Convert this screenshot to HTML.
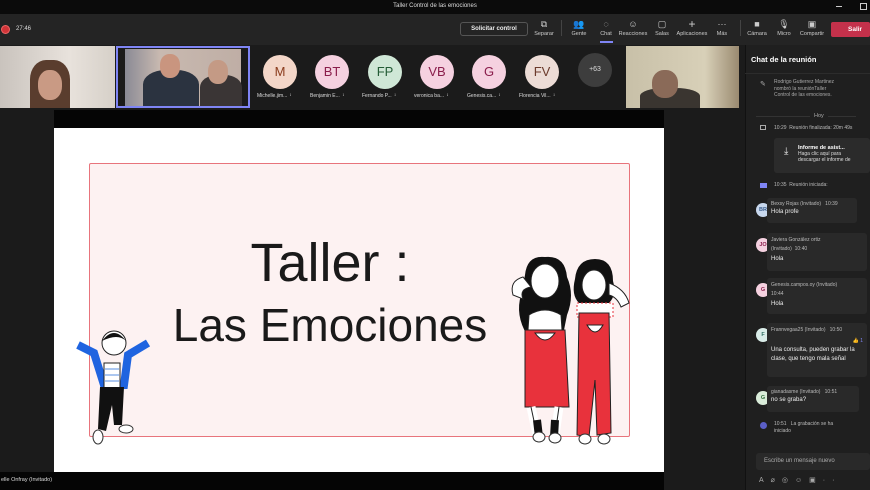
<!DOCTYPE html>
<html><head><meta charset="utf-8"><style>
*{margin:0;padding:0;box-sizing:border-box}
body{width:870px;height:490px;overflow:hidden;background:#1b1b1b;font-family:"Liberation Sans",sans-serif;color:#ddd;position:relative}
.a{position:absolute}
.tb{font-size:5.5px;color:#ccc;text-align:center;line-height:8px}
.tb i{font-style:normal;font-size:9px;display:block;height:12px;line-height:12px}
.av{width:34px;height:34px;border-radius:50%;font-size:13px;text-align:center;line-height:34px}
.nm{font-size:5px;color:#ddd;white-space:nowrap}
.msg{background:#292929;border-radius:3px;font-size:6px;color:#eee;padding:3px 4px}
.msg .h{font-size:5px;color:#bbb;margin-bottom:2px}
.ca{width:14px;height:14px;border-radius:50%;font-size:5.5px;text-align:center;line-height:14px;font-weight:bold}
</style></head><body>
<div class="a" style="left:0;top:0;width:870px;height:14px;background:#0b0b0b"></div>
<div class="a" style="left:0;top:3px;width:870px;text-align:center;font-size:6px;color:#ddd">Taller Control de las emociones</div>
<div class="a" style="left:836px;top:6px;width:6px;height:1px;background:#ccc"></div>
<div class="a" style="left:860px;top:3px;width:7px;height:7px;border:1px solid #ccc"></div>
<div class="a" style="left:0;top:14px;width:870px;height:31px;background:#242424"></div>
<div class="a" style="left:2px;top:26px;width:7px;height:7px;border-radius:50%;background:#d13438;box-shadow:0 0 0 1px #e66"></div>
<div class="a" style="left:16px;top:26px;font-size:6px;color:#ddd">27:46</div>
<div class="a" style="left:460px;top:22px;width:68px;height:14px;border:1px solid #555;border-radius:3px;font-size:6px;font-weight:bold;text-align:center;line-height:12px;color:#eee">Solicitar control</div>
<div class="a tb" style="left:531px;top:18px;width:26px"><i>⧉</i>Separar</div>
<div class="a" style="left:561px;top:20px;width:1px;height:16px;background:#444"></div>
<div class="a tb" style="left:566px;top:18px;width:26px"><i>👥</i>Gente</div>
<div class="a tb" style="left:593px;top:18px;width:26px"><i>◌</i>Chat</div>
<div class="a" style="left:600px;top:41px;width:13px;height:1.5px;background:#7f85f5"></div>
<div class="a tb" style="left:618px;top:18px;width:30px"><i>☺</i>Reacciones</div>
<div class="a tb" style="left:650px;top:18px;width:24px"><i>▢</i>Salas</div>
<div class="a tb" style="left:676px;top:18px;width:32px"><i style="font-size:12px">+</i>Aplicaciones</div>
<div class="a tb" style="left:712px;top:18px;width:20px"><i>···</i>Más</div>
<div class="a" style="left:740px;top:20px;width:1px;height:16px;background:#444"></div>
<div class="a tb" style="left:745px;top:18px;width:24px"><i>■</i>Cámara</div>
<div class="a tb" style="left:772px;top:18px;width:24px"><i>🎙</i>Micro</div>
<div class="a tb" style="left:797px;top:18px;width:30px"><i>▣</i>Compartir</div>
<div class="a" style="left:831px;top:22px;width:39px;height:15px;background:#c4314b;border-radius:2px;font-size:6.5px;font-weight:bold;color:#fff;line-height:15px;padding-left:17px">Salir</div>
<div class="a" style="left:0;top:46px;width:115px;height:62px;background:linear-gradient(90deg,#c9c3bd,#e8e2dc 60%,#d6d0c8)"></div>
<div class="a" style="left:30px;top:60px;width:40px;height:48px;border-radius:40% 40% 0 0;background:#5a3d2e"></div>
<div class="a" style="left:38px;top:70px;width:24px;height:30px;border-radius:45%;background:#c99a84"></div>
<div class="a" style="left:116px;top:46px;width:134px;height:62px;border:2px solid #7f85f5;background:#1b1b1b"></div>
<div class="a" style="left:125px;top:49px;width:116px;height:57px;background:linear-gradient(90deg,#8a8a95,#c8b9b0 30%,#bfaea5)"></div>
<div class="a" style="left:143px;top:70px;width:56px;height:36px;border-radius:40% 40% 0 0;background:#2b3340"></div>
<div class="a" style="left:160px;top:54px;width:20px;height:24px;border-radius:45%;background:#c9957f"></div>
<div class="a" style="left:200px;top:75px;width:42px;height:31px;border-radius:40% 40% 0 0;background:#3a3535"></div>
<div class="a" style="left:208px;top:60px;width:20px;height:24px;border-radius:45%;background:#c49a85"></div>
<div class="a av" style="left:263px;top:55px;background:#f3d6c8;color:#8a3b1c">M</div>
<div class="a av" style="left:315px;top:55px;background:#f5d1e0;color:#8a1d4b">BT</div>
<div class="a av" style="left:368px;top:55px;background:#cfe7d6;color:#245c36">FP</div>
<div class="a av" style="left:420px;top:55px;background:#f5d1e0;color:#8a1d4b">VB</div>
<div class="a av" style="left:472px;top:55px;background:#f5d1e0;color:#8a1d4b">G</div>
<div class="a av" style="left:525px;top:55px;background:#ecdcd6;color:#6b3a2c">FV</div>
<div class="a av" style="left:578px;top:53px;background:#3d3d3d;color:#ddd;font-size:7px">+63</div>
<div class="a nm" style="left:257px;top:93px">Michelle.jim...&nbsp; ꜟ</div>
<div class="a nm" style="left:310px;top:93px">Benjamin E... &nbsp;ꜟ</div>
<div class="a nm" style="left:362px;top:93px">Fernando P... &nbsp;ꜟ</div>
<div class="a nm" style="left:414px;top:93px">veronica ba... &nbsp;ꜟ</div>
<div class="a nm" style="left:467px;top:93px">Genesis.ca... &nbsp;ꜟ</div>
<div class="a nm" style="left:519px;top:93px">Florencia Vil... &nbsp;ꜟ</div>
<div class="a" style="left:626px;top:46px;width:113px;height:62px;background:linear-gradient(90deg,#c8c0a8,#d8d0b8 70%,#9a8a70)"></div>
<div class="a" style="left:640px;top:88px;width:60px;height:20px;border-radius:40% 40% 0 0;background:#3a3530"></div>
<div class="a" style="left:652px;top:70px;width:26px;height:28px;border-radius:45%;background:#8a6a58"></div>
<div class="a" style="left:54px;top:110px;width:610px;height:18px;background:#050505"></div>
<div class="a" style="left:0;top:472px;width:664px;height:18px;background:#050505"></div>
<div class="a" style="left:1px;top:477px;font-size:5.5px;color:#ddd">elle Onfray (Invitado)</div>
<div class="a" style="left:54px;top:128px;width:610px;height:344px;background:#fff"></div>
<div class="a" style="left:89px;top:163px;width:541px;height:274px;background:#fdf2f2;border:1.5px solid #e8747c;border-radius:2px"></div>
<div class="a" style="left:160px;top:233px;width:340px;text-align:center;font-size:54px;color:#1a1a1a;line-height:60px">Taller :</div>
<div class="a" style="left:150px;top:298px;width:360px;text-align:center;font-size:46px;color:#1a1a1a;line-height:54px">Las Emociones</div>
<svg class="a" style="left:74px;top:325px" width="80" height="125" viewBox="0 0 80 125">
<path d="M4 20 L20 28 L30 60 L50 60 L54 30 L74 18" stroke="#1f64e0" stroke-width="8" fill="none"/>
<rect x="30" y="38" width="16" height="26" fill="#fff" stroke="#222"/>
<path d="M31 44h14M31 50h14M31 56h14" stroke="#5a8fe0"/>
<path d="M26 62 L50 62 L48 100 L40 100 L38 80 L32 106 L24 104Z" fill="#111"/>
<circle cx="40" cy="18" r="12" fill="#fff" stroke="#222"/>
<path d="M28 16 Q40 0 52 16 Q44 8 28 16" fill="#111"/>
<ellipse cx="24" cy="112" rx="5" ry="7" fill="#fff" stroke="#333"/>
<ellipse cx="52" cy="104" rx="7" ry="4" fill="#fff" stroke="#333"/>
</svg>
<svg class="a" style="left:505px;top:255px" width="130" height="195" viewBox="0 0 130 195">
<!-- girl1 hair -->
<path d="M20 20 Q22 0 40 2 Q60 0 62 22 Q70 40 62 60 L58 80 L22 80 Q10 60 16 40Z" fill="#111"/>
<path d="M8 40 Q4 26 18 22 L26 32 Q14 34 18 44Z" fill="#fff" stroke="#222"/>
<ellipse cx="40" cy="26" rx="14" ry="17" fill="#fff" stroke="#222"/>
<!-- girl1 overalls -->
<path d="M24 60 Q40 50 56 60 L58 90 L22 90Z" fill="#fff" stroke="#222"/>
<path d="M20 75 L60 75 L64 152 L20 152Z" fill="#e8323c" stroke="#222"/>
<path d="M30 78 Q40 92 50 78Z" fill="#fff" stroke="#222"/>
<path d="M26 152 L32 180 M54 152 L50 180" stroke="#fff" stroke-width="9"/>
<path d="M26 152 L32 180 M54 152 L50 180" stroke="#222" stroke-width="1" fill="none"/>
<path d="M32 165 L34 182 M50 165 L49 182" stroke="#111" stroke-width="8"/>
<!-- girl2 hair -->
<path d="M70 24 Q72 4 90 4 Q108 4 108 26 Q112 40 104 48 L74 48 Q66 40 70 24Z" fill="#111"/>
<ellipse cx="89" cy="30" rx="12" ry="15" fill="#fff" stroke="#222"/>
<path d="M104 28 Q120 34 124 48 L116 52 Q112 42 104 40Z" fill="#fff" stroke="#222"/>
<path d="M72 48 L108 48 L108 62 L72 62Z" fill="#fff" stroke="#e8323c" stroke-dasharray="2 2"/>
<path d="M74 58 L104 58 L106 178 L92 180 L90 125 L84 182 L72 180Z" fill="#e8323c" stroke="#222"/>
<path d="M82 70 Q90 84 98 70Z" fill="#fff" stroke="#222"/>
<ellipse cx="34" cy="182" rx="6" ry="5" fill="#fff" stroke="#333"/>
<ellipse cx="50" cy="183" rx="6" ry="5" fill="#fff" stroke="#333"/>
<ellipse cx="80" cy="184" rx="6" ry="5" fill="#fff" stroke="#333"/>
<ellipse cx="99" cy="184" rx="6" ry="5" fill="#fff" stroke="#333"/>
</svg>
<div class="a" style="left:745px;top:45px;width:125px;height:445px;background:#1f1f1f;border-left:1px solid #111"></div>
<div class="a" style="left:751px;top:55px;font-size:7.5px;font-weight:bold;color:#fff">Chat de la reunión</div>
<div class="a" style="left:745px;top:73px;width:125px;height:1px;background:#2c2c2c"></div>
<div class="a" style="left:760px;top:80px;font-size:7px;color:#aaa">✎</div>
<div class="a" style="left:774px;top:79px;font-size:5px;color:#aaa;line-height:6.5px">Rodrigo Gutierrez Martinez<br>nombró la reuniónTaller<br>Control de las emociones.</div>
<div class="a" style="left:756px;top:116px;width:100px;height:1px;background:#333"></div>
<div class="a" style="left:810px;top:113px;font-size:5.5px;color:#aaa;background:#1f1f1f;padding:0 4px">Hoy</div>
<div class="a" style="left:760px;top:125px;width:6px;height:5px;border:1px solid #aaa"></div>
<div class="a" style="left:774px;top:125px;font-size:5px;color:#bbb">10:29 &nbsp;Reunión finalizada: 20m 49s</div>
<div class="a" style="left:774px;top:138px;width:96px;height:35px;background:#2b2b2b;border-radius:3px"></div>
<div class="a" style="left:784px;top:146px;font-size:10px;color:#eee">⤓</div>
<div class="a" style="left:798px;top:145px;font-size:5px;color:#ddd;line-height:6px"><b style="font-size:5.5px;color:#fff">Informe de asist...</b><br>Haga clic aquí para<br>descargar el informe de</div>
<div class="a" style="left:760px;top:183px;width:7px;height:5px;background:#7f85f5"></div>
<div class="a" style="left:774px;top:182px;font-size:5px;color:#bbb">10:35 &nbsp;Reunión iniciada:</div>
<div class="a ca" style="left:756px;top:203px;background:#c8d8ee;color:#3b5e8c">BR</div>
<div class="a msg" style="left:767px;top:198px;width:90px;height:25px"><div class="h">Bexsy Rojas (Invitado) &nbsp; 10:39</div>Hola profe</div>
<div class="a ca" style="left:756px;top:238px;background:#f5d1e0;color:#8a1d4b">JO</div>
<div class="a msg" style="left:767px;top:233px;width:100px;height:38px"><div class="h" style="line-height:9px">Javiera González ortiz<br>(Invitado) &nbsp;10:40</div>Hola</div>
<div class="a ca" style="left:756px;top:283px;background:#f5d1e0;color:#8a1d4b">G</div>
<div class="a msg" style="left:767px;top:278px;width:100px;height:36px"><div class="h" style="line-height:9px">Genesis.campos.oy (Invitado)<br>10:44</div>Hola</div>
<div class="a ca" style="left:756px;top:328px;background:#d9ece8;color:#2f6e62">F</div>
<div class="a msg" style="left:767px;top:323px;width:100px;height:54px;line-height:9px"><div class="h">Frannvegaa25 (Invitado) &nbsp; 10:50</div><div style="text-align:right;font-size:5px;color:#7f85f5">👍 1</div>Una consulta, pueden grabar la clase, que tengo mala señal</div>
<div class="a ca" style="left:756px;top:391px;background:#d9ecd9;color:#2f6e3a">G</div>
<div class="a msg" style="left:767px;top:386px;width:92px;height:26px"><div class="h">gianadasme (Invitado) &nbsp; 10:51</div>no se graba?</div>
<div class="a" style="left:760px;top:422px;width:7px;height:7px;border-radius:50%;background:#5b5fc7"></div>
<div class="a" style="left:774px;top:421px;font-size:5px;color:#bbb;line-height:7px">10:51 &nbsp; La grabación se ha<br>iniciado</div>
<div class="a" style="left:756px;top:453px;width:114px;height:17px;background:#292929;border-radius:3px;font-size:6px;color:#aaa;line-height:17px;padding-left:8px">Escribe un mensaje nuevo</div>
<div class="a" style="left:759px;top:476px;font-size:7px;color:#aaa;letter-spacing:7px">A⌀◎☺▣··</div>
</body></html>
